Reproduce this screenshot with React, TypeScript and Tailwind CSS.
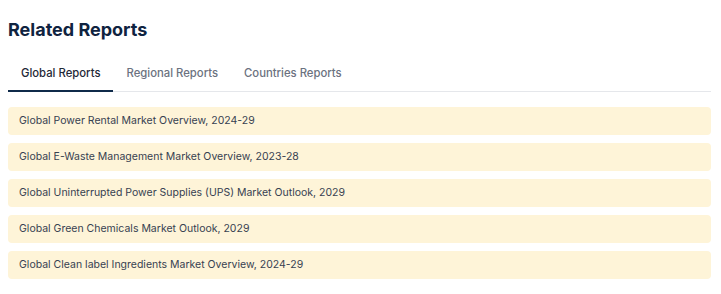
import React, { useState } from 'react';

const tabs = ['Global Reports', 'Regional Reports', 'Countries Reports'];

const reports = [
  'Global Power Rental Market Overview, 2024-29',
  'Global E-Waste Management Market Overview, 2023-28',
  'Global Uninterrupted Power Supplies (UPS) Market Outlook, 2029',
  'Global Green Chemicals Market Outlook, 2029',
  'Global Clean label Ingredients Market Overview, 2024-29',
];

export default function App() {
  const [active, setActive] = useState(0);

  return (
    <div className="w-[721px] h-[294px] bg-white pl-2 pr-[10px] pt-[18px] font-['Inter',sans-serif]">
      <h2 className="text-[18px] leading-[24px] font-bold text-[#0f2340]">Related Reports</h2>

      <div className="mt-[23px] flex border-b border-[#e5e7eb]">
        {tabs.map((tab, i) => (
          <button
            key={tab}
            onClick={() => setActive(i)}
            className={
              i === active
                ? 'px-[13px] pb-[8px] -mb-px border-b-2 border-[#0f2a4a] text-[11.3px] leading-[17px] font-medium text-[#1f2937]'
                : 'px-[13px] pb-[8px] -mb-px border-b-2 border-transparent text-[11.3px] leading-[17px] font-medium text-[#6b7280]'
            }
          >
            {tab}
          </button>
        ))}
      </div>

      <ul className="mt-[15px] flex flex-col gap-2">
        {reports.map((r) => (
          <li
            key={r}
            className="h-[28px] flex items-center px-[11px] rounded-[4px] bg-[#fef4d8] text-[10.5px] text-[#374151]"
          >
            {r}
          </li>
        ))}
      </ul>
    </div>
  );
}
